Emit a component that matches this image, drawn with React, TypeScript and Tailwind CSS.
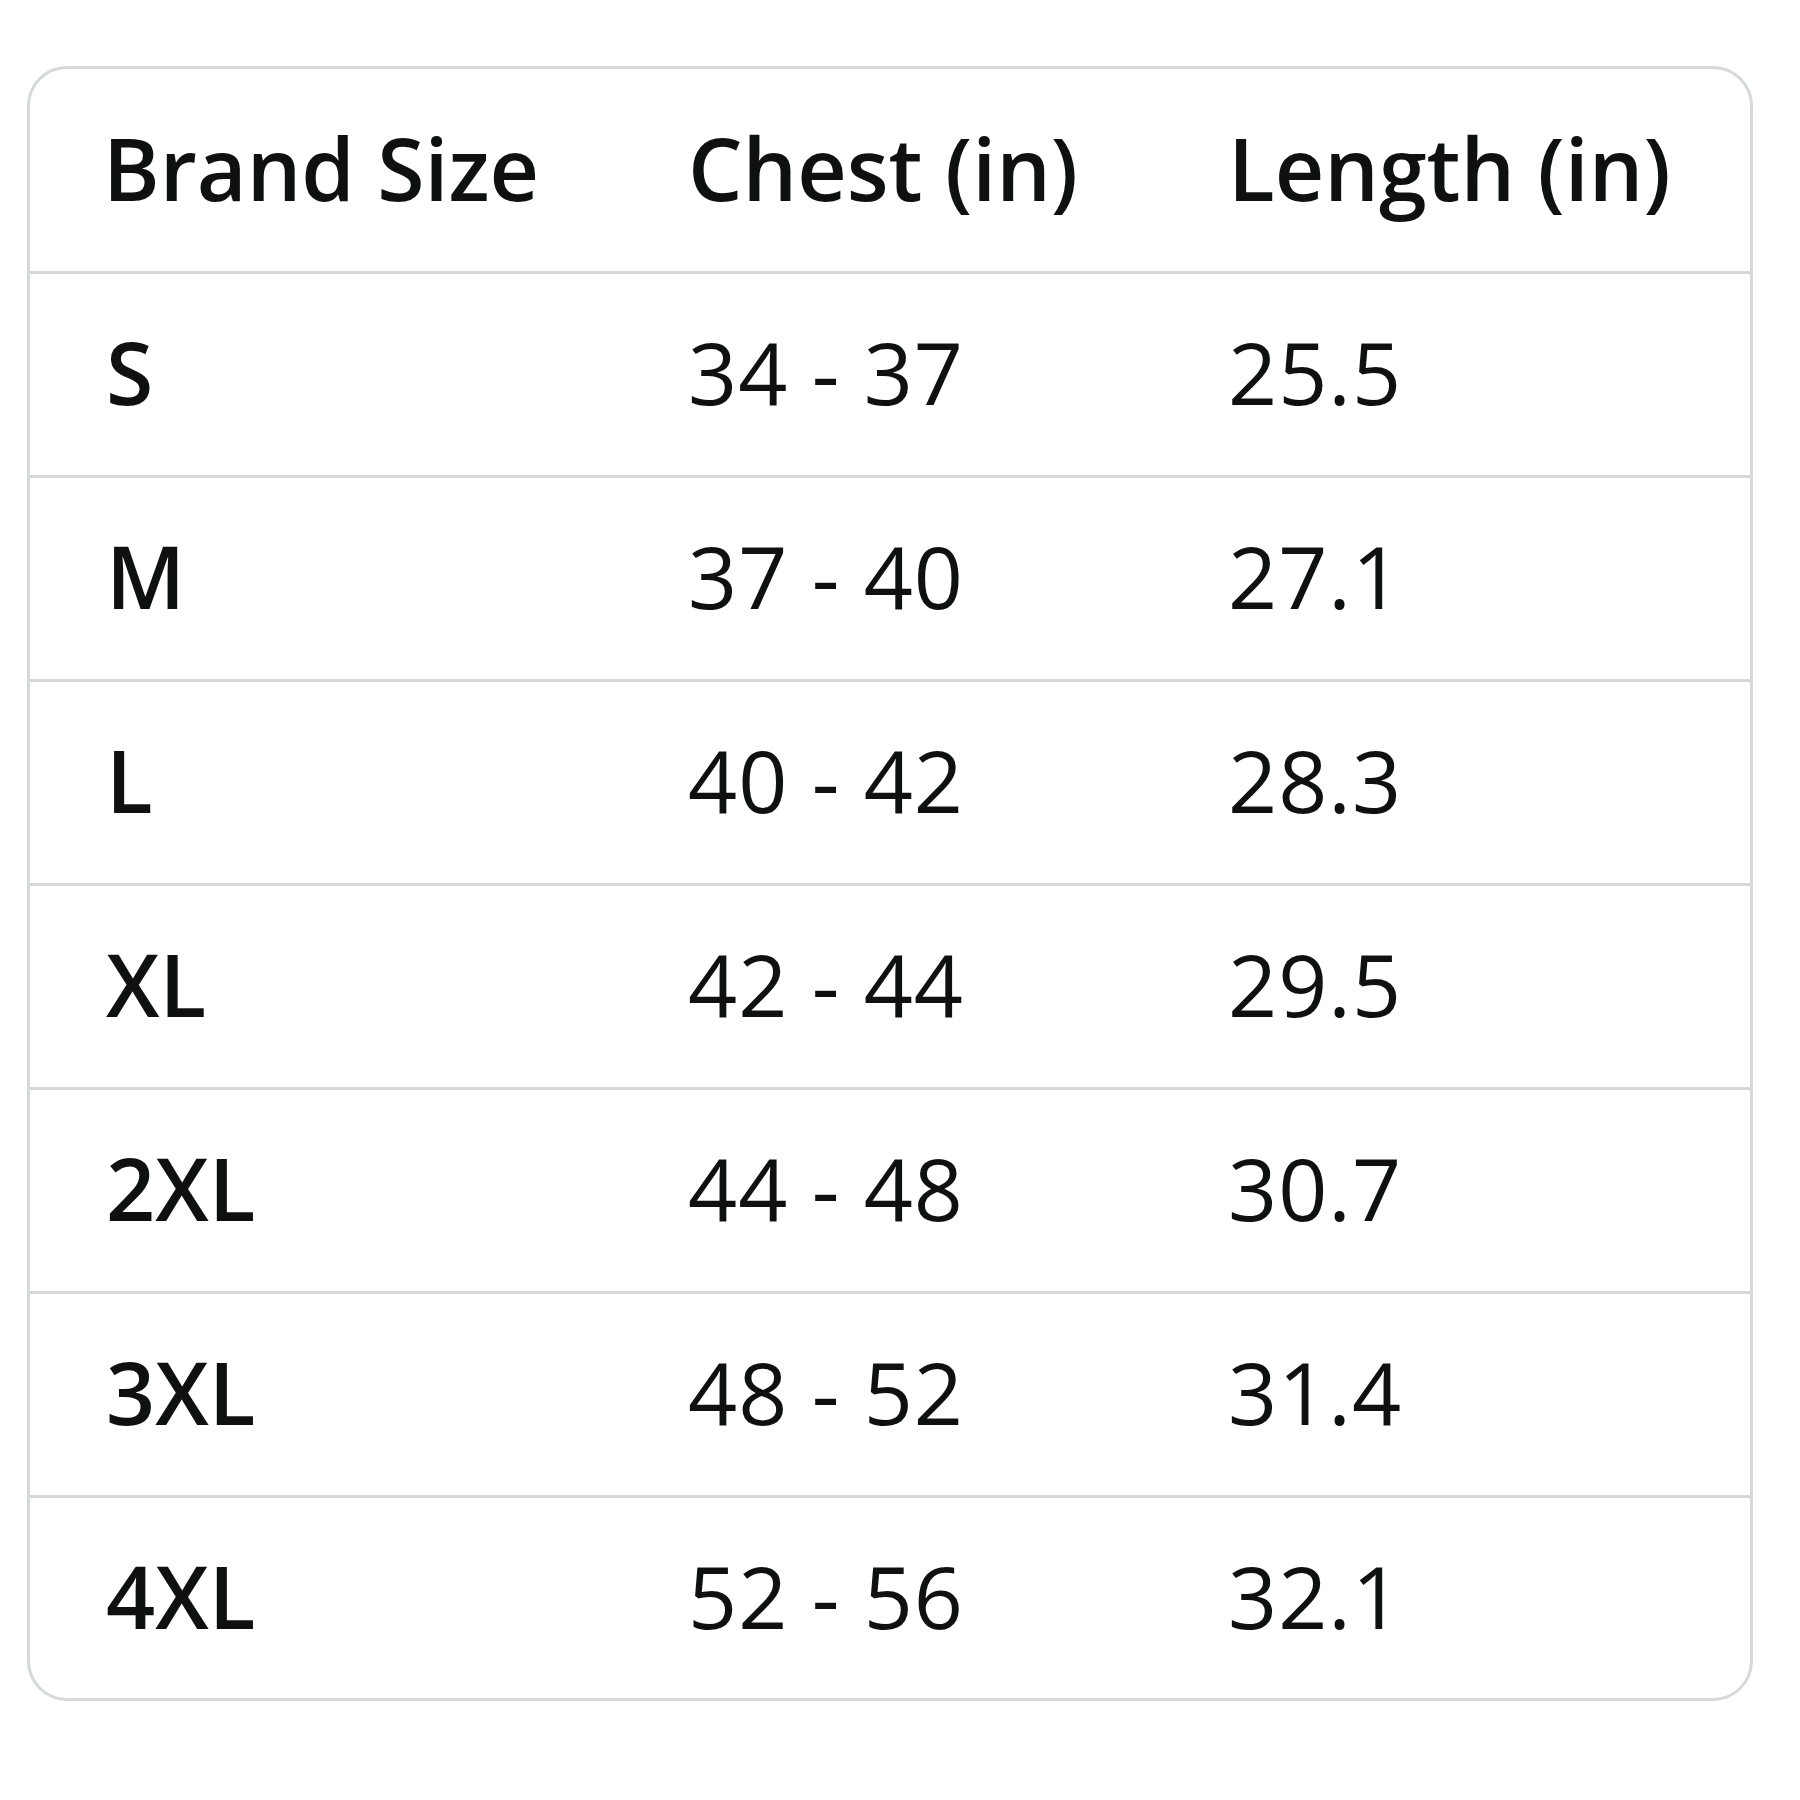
const rows = [
  ["S", "34 - 37", "25.5"],
  ["M", "37 - 40", "27.1"],
  ["L", "40 - 42", "28.3"],
  ["XL", "42 - 44", "29.5"],
  ["2XL", "44 - 48", "30.7"],
  ["3XL", "48 - 52", "31.4"],
  ["4XL", "52 - 56", "32.1"],
];

export default function App() {
  return (
    <div className="min-h-screen bg-white pl-[27px] pt-[66px] text-[#0f1111]" style={{ fontFamily: '"Open Sans", "Noto Sans", sans-serif' }}>
      <div className="w-[1726px] overflow-hidden rounded-[40px] border-[3px] border-[#d5d9d9] bg-white">
        <div className="grid h-[205px] grid-cols-[585px_540px_1fr] items-center border-b-[3px] border-[#d5d9d9] pb-[6px] pl-[73px] text-[86px] font-semibold">
          <div>Brand Size</div>
          <div>Chest (in)</div>
          <div>Length (in)</div>
        </div>
        {rows.map((r, i) => (
          <div
            key={r[0]}
            className={
              "grid grid-cols-[585px_540px_1fr] items-center pb-[6px] pl-[73px] text-[86px] " +
              (i < rows.length - 1 ? "h-[204px] border-b-[3px] border-[#d5d9d9]" : "h-[200px]")
            }
          >
            <div className="pl-[3px] font-semibold">{r[0]}</div>
            <div className="tracking-[1px]">{r[1].replace(" - ", "\u00a0-\u00a0")}</div>
            <div className="tracking-[1px]">{r[2]}</div>
          </div>
        ))}
      </div>
    </div>
  );
}
